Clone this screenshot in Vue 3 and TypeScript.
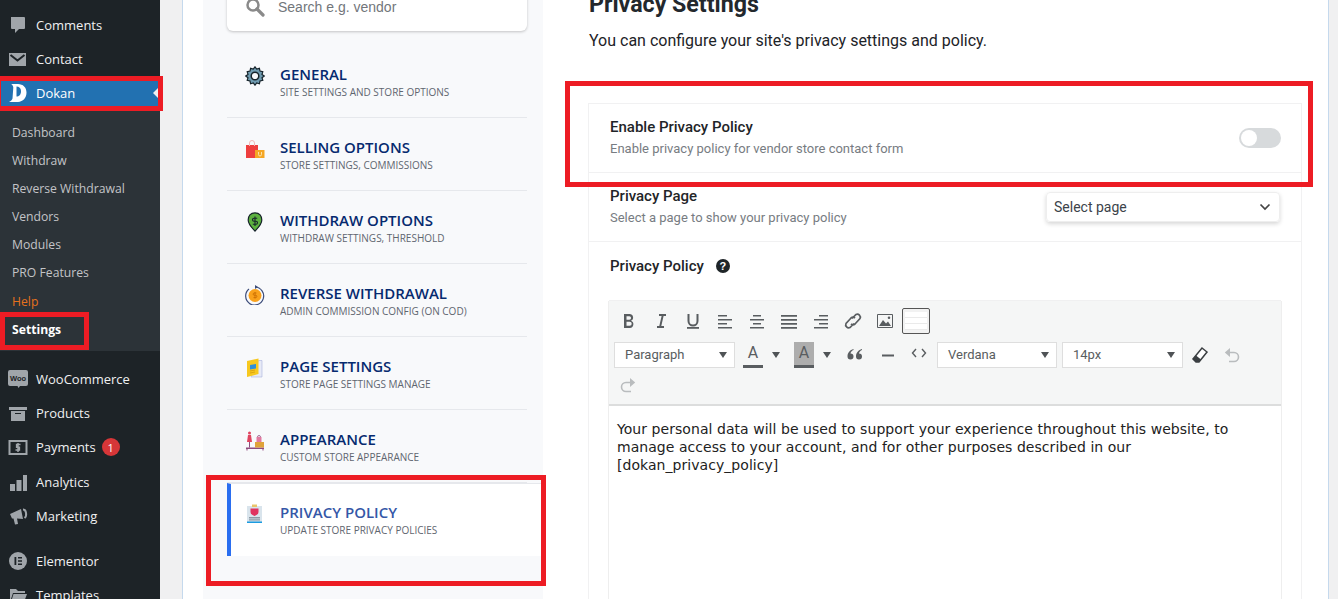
<script setup lang="ts">
interface Shape { d: string; fill?: string; stroke?: string; sw?: number }
interface MenuItem { label: string; icon: Shape[]; badge?: string; cls?: string }
interface NavItem { title: string; sub: string; icon: Shape[]; active?: boolean }

const g = '#a0a5aa'
const topMenu: MenuItem[] = [
  { label: 'Comments', icon: [{ d: 'M3 2h13a1 1 0 0 1 1 1v10a1 1 0 0 1-1 1h-5l-4 4v-4H4a1 1 0 0 1-1-1z', fill: g }] },
  { label: 'Contact', icon: [{ d: 'M1 4h17v13H1z', fill: g }, { d: 'M2.5 6l7 5.5 7-5.5', stroke: '#1d2327', sw: 2 }] }
]
const lowerA: MenuItem[] = [
  { label: 'Products', icon: [{ d: 'M1 4h18v3H1z', fill: g }, { d: 'M3 8h14v10H3z', fill: g }, { d: 'M7 10h6v1H7z', fill: '#1d2327' }] },
  { label: 'Payments', badge: '1', icon: [{ d: 'M1.5 4h17v13h-17z', stroke: g, sw: 2 }, { d: 'M12.5 7.5H8.6v2.8h2.8v2.8H7.5M10 6v9', stroke: g, sw: 1.5 }] },
  { label: 'Analytics', cls: 'nudge', icon: [{ d: 'M2 12h5v7H2zM8.5 8h5v11h-5zM15 3h4v16h-4z', fill: g }] },
  { label: 'Marketing', icon: [{ d: 'M2 8l11-5 2 10-6-.5 1 5.5-3 .5-1.500-6H4z', fill: g }, { d: 'M15 3.500a3 4.500 0 0 1 1.500 8.500', stroke: g, sw: 2 }] }
]
const lowerB: MenuItem[] = [
  { label: 'Elementor', icon: [{ d: 'M10 1a9 9 0 1 0 0 18 9 9 0 0 0 0-18z', fill: g }, { d: 'M6.500 6h1.800v8H6.500zM10 6h4v1.600h-4zM10 9.200h4v1.600h-4zM10 12.400h4V14h-4z', fill: '#1d2327' }] },
  { label: 'Templates', icon: [{ d: 'M2 4h6l2 2h7v2H5l-3 9z', fill: g }, { d: 'M5.500 9H19l-3 8H3z', fill: g }] }
]
const subMenu: string[] = ['Dashboard', 'Withdraw', 'Reverse Withdrawal', 'Vendors', 'Modules', 'PRO Features']

const nav: NavItem[] = [
  { title: 'GENERAL', sub: 'SITE SETTINGS AND STORE OPTIONS', icon: [
    { d: 'M10 .8l1.700 2.300 2.700-.8.600 2.800 2.800.6-.8 2.700 2.300 1.600-2.300 1.700.8 2.700-2.800.6-.6 2.800-2.700-.8L10 19.200l-1.700-2.200-2.700.8-.6-2.800-2.800-.6.8-2.700L.8 10l2.200-1.600-.8-2.700L5 5.100l.6-2.800 2.700.8z', fill: '#6f9bb0', stroke: '#17242b', sw: 1.200 },
    { d: 'M10 6.200a3.800 3.800 0 1 0 0 7.600 3.800 3.800 0 0 0 0-7.600z', fill: '#f8f9fb', stroke: '#17242b', sw: 1.500 }
  ] },
  { title: 'SELLING OPTIONS', sub: 'STORE SETTINGS, COMMISSIONS', icon: [
    { d: 'M1 6h12v13H1z', fill: '#ee3e3e' }, { d: 'M10 11h9.500v8H10z', fill: '#f5a623' },
    { d: 'M4.500 7V4a2.500 2.500 0 0 1 5 0v3', stroke: '#f3b8b8', sw: 1 }, { d: 'M13.500 13v2.500a1.500 1.500 0 0 0 3 0V13', stroke: '#fbe2a9', sw: 1 }
  ] },
  { title: 'WITHDRAW OPTIONS', sub: 'WITHDRAW SETTINGS, THRESHOLD', icon: [
    { d: 'M10 .8C5.500 .8 3.200 4 3.200 8c0 4.500 4 8 6.800 11 2.800-3 6.800-6.500 6.800-11 0-4-2.300-7.200-6.800-7.200z', fill: '#5cb13f', stroke: '#17242b', sw: 1.200 },
    { d: 'M12.200 6.200H9a1.500 1.500 0 0 0 0 3h2a1.500 1.500 0 0 1 0 3H7.800M10 4.500v9.500', stroke: '#17242b', sw: 1.100 }
  ] },
  { title: 'REVERSE WITHDRAWAL', sub: 'ADMIN COMMISSION CONFIG (ON COD)', icon: [
    { d: 'M4 4a9 9 0 1 0 6-2', stroke: '#3d4d7a', sw: 1.200 }, { d: 'M10 0l3 2-3 2z', fill: '#3d4d7a' },
    { d: 'M10 4a6.500 6.500 0 1 0 0 13 6.500 6.500 0 0 0 0-13z', fill: '#f9a11b' }, { d: 'M11.500 8H9.300a1 1 0 0 0 0 2.300h1.400a1 1 0 0 1 0 2.300H8.500M10 7v6.500', stroke: '#c76a00', sw: .8 }
  ] },
  { title: 'PAGE SETTINGS', sub: 'STORE PAGE SETTINGS MANAGE', icon: [
    { d: 'M13.500 2.500H17V19H6z', fill: '#e7eaf6', stroke: '#a8b2dd', sw: .6 }, { d: 'M2 3l11.500-2.500V16L2 19z', fill: '#f7c81e' },
    { d: 'M5 7l6-1v4.500l-6 1z', fill: '#2f8fd8' }, { d: 'M5 13l5-1M5 15l5-1', stroke: '#d59b0e', sw: .8 }
  ] },
  { title: 'APPEARANCE', sub: 'CUSTOM STORE APPEARANCE', icon: [
    { d: 'M1 16.500h18V18H1z', fill: '#8e4a7d' }, { d: 'M2 18v1.500M18 18v1.500', stroke: '#8e4a7d', sw: 1 },
    { d: 'M4.500 0.500a1.500 1.500 0 1 1 0 3 1.500 1.500 0 0 1 0-3zM3 4h3l1 7H2z', fill: '#e0445f' }, { d: 'M4 11h1v5.500H4z', fill: '#8e4a7d' },
    { d: 'M10 11h9v5.500h-9z', fill: '#e0a23a' }, { d: 'M11.500 6h5v5h-5z', fill: '#e27aa0' }, { d: 'M12.500 6a1.500 1.500 0 0 1 3 0', stroke: '#8e4a7d', sw: .8 }
  ] },
  { title: 'PRIVACY POLICY', sub: 'UPDATE STORE PRIVACY POLICIES', active: true, icon: [
    { d: 'M2 2h15v17H2z', fill: '#d9e4ec' }, { d: 'M7 .5h5V3H7z', fill: '#e9c46a' },
    { d: 'M5.500 4.500h8v3.500c0 2-2 3-4 4-2-1-4-2-4-4z', fill: '#e0335f' }, { d: 'M4 13h11v1.500H4zM4 15.300h11v1.200H4z', fill: '#8d9aa5' }, { d: 'M2 17.500h15V19H2z', fill: '#1b9be0' }
  ] }
]

const row1: Shape[][] = [
  [{ d: 'M5 3h5.500a3.500 3.500 0 0 1 1.500 6.700A3.800 3.800 0 0 1 11 17H5zM7.500 5.200v3.500h2.800a1.750 1.750 0 0 0 0-3.500zM7.500 10.800v4h3.200a2 2 0 0 0 0-4z', fill: '#595d60' }],
  [{ d: 'M8 3h7v2h-2.400l-2.300 10H13v2H6v-2h2.300l2.300-10H8z', fill: '#595d60' }],
  [{ d: 'M5.500 3v7a4.500 4.500 0 0 0 9 0V3', stroke: '#595d60', sw: 2 }, { d: 'M4 16h12v1.800H4z', fill: '#595d60' }],
  [{ d: 'M3 4h9v1.500H3zM3 8h14v1.500H3zM3 12h9v1.500H3zM3 16h14v1.500H3z', fill: '#595d60' }],
  [{ d: 'M6 4h8v1.500H6zM3 8h14v1.500H3zM6 12h8v1.500H6zM3 16h14v1.500H3z', fill: '#595d60' }],
  [{ d: 'M2 4h16v1.800H2zM2 8h16v1.800H2zM2 12h16v1.800H2zM2 16h16v1.800H2z', fill: '#595d60' }],
  [{ d: 'M8 4h9v1.500H8zM3 8h14v1.500H3zM8 12h9v1.500H8zM3 16h14v1.500H3z', fill: '#595d60' }],
  [{ d: 'M9 7.500l4-4a3 3 0 0 1 4 4l-5 5.500a3 3 0 0 1-4 0M11 12.500l-4 4a3 3 0 0 1-4-4l5-5.500a3 3 0 0 1 4 0', stroke: '#595d60', sw: 1.700 }],
  [{ d: 'M2.500 3.500h15v13h-15z', stroke: '#595d60', sw: 1 }, { d: 'M4 15l4-6 3 3.500 2-2 3 4.500z', fill: '#595d60' }, { d: 'M14 5.500a1.300 1.300 0 1 1 0 2.600 1.300 1.300 0 0 1 0-2.600z', fill: '#595d60' }]
]
</script>

<template>
  <div class="page">
    <aside class="side">
      <div class="row" v-for="m in topMenu" :key="m.label">
        <svg class="mi" viewBox="0 0 20 20"><path v-for="(s, i) in m.icon" :key="i" :d="s.d" :fill="s.fill || 'none'" :stroke="s.stroke" :stroke-width="s.sw" /></svg>
        <span>{{ m.label }}</span>
      </div>
      <div class="row current">
        <svg class="mi" viewBox="0 0 20 20"><path d="M3 1h7c5 0 8.500 3.500 8.500 8.500 0 5.500-3.500 9-8.500 9.500H1c2-1 3-2 3.500-3.500l.8-11c0-1.500-1-3-2.300-3.500z" fill="#fff" /><path d="M8.500 3.500v10c2.500 0 4.500-1.500 4.500-5.500 0-3-2-4.500-4.500-4.500z" fill="#2271b1" /></svg>
        <span>Dokan</span>
      </div>
      <div class="sub">
        <div class="sub-item" v-for="s in subMenu" :key="s">{{ s }}</div>
        <div class="sub-item help">Help</div>
        <div class="sub-item strong">Settings</div>
      </div>
      <div class="row woo">
        <svg class="mi" viewBox="0 0 20 20"><path d="M2 1h16a2 2 0 0 1 2 2v12a2 2 0 0 1-2 2h-6l-1.500 2-1-2H2a2 2 0 0 1-2-2V3a2 2 0 0 1 2-2z" :fill="g" /><text x="10" y="12" text-anchor="middle" font-size="7.500" font-weight="700" fill="#1d2327" font-family="Liberation Sans, sans-serif">Woo</text></svg>
        <span>WooCommerce</span>
      </div>
      <div class="row" v-for="m in lowerA" :key="m.label" :class="m.cls">
        <svg class="mi" viewBox="0 0 20 20"><path v-for="(s, i) in m.icon" :key="i" :d="s.d" :fill="s.fill || 'none'" :stroke="s.stroke" :stroke-width="s.sw" /></svg>
        <span>{{ m.label }}</span>
        <b v-if="m.badge" class="badge">{{ m.badge }}</b>
      </div>
      <div class="sep"></div>
      <div class="row" v-for="m in lowerB" :key="m.label">
        <svg class="mi" viewBox="0 0 20 20"><path v-for="(s, i) in m.icon" :key="i" :d="s.d" :fill="s.fill || 'none'" :stroke="s.stroke" :stroke-width="s.sw" /></svg>
        <span>{{ m.label }}</span>
      </div>
      <div class="mark mark-dokan"></div>
      <div class="mark mark-settings"></div>
    </aside>

    <div class="content">
      <div class="panel">
        <nav class="nav">
          <div class="search">
            <svg width="20" height="20" viewBox="0 0 20 20"><circle cx="8" cy="8" r="5.500" fill="none" stroke="#8a8a8a" stroke-width="2.500" /><path d="M12 12l6 6" stroke="#8a8a8a" stroke-width="3.200" stroke-linecap="round" /></svg>
            <span>Search e.g. vendor</span>
          </div>
          <div class="nav-item" v-for="n in nav" :key="n.title" :class="{ active: n.active }">
            <svg class="ni" viewBox="0 0 20 20"><path v-for="(s, i) in n.icon" :key="i" :d="s.d" :fill="s.fill || 'none'" :stroke="s.stroke" :stroke-width="s.sw" /></svg>
            <div>
              <div class="nt">{{ n.title }}</div>
              <div class="ns">{{ n.sub }}</div>
            </div>
          </div>
          <div class="mark mark-nav"></div>
        </nav>

        <main class="main">
          <h2>Privacy Settings</h2>
          <p class="lead">You can configure your site's privacy settings and policy.</p>
          <section class="field first-field">
            <div>
              <div class="fl">Enable Privacy Policy</div>
              <div class="fd">Enable privacy policy for vendor store contact form</div>
            </div>
            <div class="toggle"><i></i></div>
          </section>
          <section class="field page-field">
            <div>
              <div class="fl">Privacy Page</div>
              <div class="fd">Select a page to show your privacy policy</div>
            </div>
            <div class="select">
              <span>Select page</span>
              <svg width="12" height="8" viewBox="0 0 12 8"><path d="M1.500 1.500L6 6l4.500-4.500" fill="none" stroke="#444" stroke-width="1.700" /></svg>
            </div>
          </section>
          <section class="policy">
            <div class="fl pl">
              Privacy Policy
              <span class="q">?</span>
            </div>
            <div class="editor">
              <div class="toolbar">
                <div class="tb-row">
                  <span class="tb" v-for="(ic, n) in row1" :key="n"><svg width="20" height="20" viewBox="0 0 20 20"><path v-for="(s, i) in ic" :key="i" :d="s.d" :fill="s.fill || 'none'" :stroke="s.stroke" :stroke-width="s.sw" /></svg></span>
                  <span class="tb-table"><i></i></span>
                </div>
                <div class="tb-row second">
                  <div class="dd w121"><span>Paragraph</span><i class="car"></i></div>
                  <span class="color"><u>A</u></span><i class="car mid"></i>
                  <span class="color bg"><u>A</u></span><i class="car mid wide"></i>
                  <span class="tb t2"><svg width="20" height="20" viewBox="0 0 20 20"><path d="M8.500 4C5 5 2.500 7.500 2.500 11.500a3 3 0 1 0 3-3c0-1.500 1.500-3 3-3.500zM17 4c-3.500 1-6 3.500-6 7.500a3 3 0 1 0 3-3c0-1.500 1.500-3 3-3.500z" fill="#595d60" /></svg></span>
                  <span class="tb t2 hr"><svg width="20" height="20" viewBox="0 0 20 20"><path d="M4 9.500h12v2H4z" fill="#595d60" /></svg></span>
                  <span class="tb t2 up"><svg width="20" height="20" viewBox="0 0 20 20"><path d="M7 6L3.500 10 7 14M13 6l3.500 4-3.500 4" fill="none" stroke="#595d60" stroke-width="1.400" /></svg></span>
                  <div class="dd w120 first"><span>Verdana</span><i class="car"></i></div>
                  <div class="dd w121 s14"><span>14px</span><i class="car"></i></div>
                  <span class="tb t2 er"><svg width="20" height="20" viewBox="0 0 20 20"><path d="M12 3l5 4-8 10H6l-3-3z" fill="#fff" stroke="#3b3f42" stroke-width="1.500" /><path d="M3 14l3 3h3l2-2.500-5-4z" fill="#3b3f42" /></svg></span>
                  <span class="tb t2"><svg width="20" height="20" viewBox="0 0 20 20"><path d="M4.500 7.500H12a4.500 4.500 0 0 1 0 9H7" fill="none" stroke="#b9bcbe" stroke-width="1.600" /><path d="M8 3v9L2.800 7.500z" fill="#b9bcbe" /></svg></span>
                </div>
                <div class="tb-row third">
                  <span class="tb"><svg width="20" height="20" viewBox="0 0 20 20"><path d="M15.500 7.500H8a4.500 4.500 0 0 0 0 9h5" fill="none" stroke="#b9bcbe" stroke-width="1.600" /><path d="M12 3v9l5.200-4.500z" fill="#b9bcbe" /></svg></span>
                </div>
              </div>
              <div class="body">Your personal data will be used to support your experience throughout this website, to manage access to your account, and for other purposes described in our [dokan_privacy_policy]</div>
            </div>
          </section>
          <div class="mark mark-main"></div>
        </main>
      </div>
    </div>
  </div>
</template>

<style>
html, body { margin: 0; background: #f0f0f1; overflow: hidden; }
</style>

<style scoped>
.page { display: flex; width: 1338px; height: 599px; overflow: hidden; background: #f0f0f1; font-family: "Open Sans", sans-serif; }
.side { position: relative; width: 160px; flex: none; background: #1d2327; color: #f0f0f1; padding-top: 8px; box-sizing: border-box; font-size: 13px; }
.row { height: 34px; display: flex; align-items: center; padding-left: 8px; gap: 8px; }
.row.current { background: #2271b1; color: #fff; position: relative; }
.row.current::after { content: ""; position: absolute; right: 0; top: 10px; border: 7px solid transparent; border-right: 7px solid #f0f0f1; border-left: 0; }
.row.woo { margin-top: 11px; }
.row.nudge { margin-top: 1px; }
.mi { width: 20px; height: 20px; flex: none; }
.badge { width: 18px; height: 18px; border-radius: 50%; background: #d63638; color: #fff; font-size: 11px; font-weight: 400; display: flex; align-items: center; justify-content: center; margin-left: -2px; }
.sep { height: 11px; }
.sub { background: #2c3338; padding: 8px 0; }
.sub-item { height: 28px; line-height: 28px; padding-left: 12px; color: #c3c4c7; font-size: 12.200px; position: relative; top: 1px; }
.help { color: #e6711d; margin-top: 1px; }
.strong { color: #fff; font-weight: 700; }
.content { flex: 1; padding: 0 9px 0 22px; min-width: 0; }
.panel { display: flex; height: 599px; background: #fff; border-left: 1px solid #c5d9ed; border-right: 1px solid #c5d9ed; padding-left: 20px; box-sizing: border-box; }
.nav { position: relative; width: 340px; flex: none; background: #f8f9fb; padding: 0 0 0 24px; box-sizing: border-box; }
.search { height: 49px; margin: -18px 16px 14px 0; background: #fff; border-radius: 6px; box-shadow: 0 1px 3px rgba(0,0,0,.22); display: flex; align-items: center; padding: 0 0 0 18px; box-sizing: border-box; gap: 13px; color: #72767b; font: 14px "Liberation Sans", sans-serif; }
.nav-item { height: 73px; box-sizing: border-box; width: 300px; display: flex; align-items: center; gap: 15px; padding: 4px 0 0 18px; border-bottom: 1px solid #e6e8ec; }
.nav-item.active { background: #fff; width: 316px; border-left: 4px solid #2a6ef0; padding: 2px 0 0 14px; border-top: 1px solid #e6e8ec; border-bottom: 0; }
.ni { width: 20px; height: 20px; flex: none; margin-top: -14px; }
.nt { color: #062a6f; font-size: 15px; font-weight: 600; line-height: 18px; }
.active .nt { color: #3557a7; }
.ns { color: #5f6670; font-size: 10px; line-height: 18px; }
.main { position: relative; flex: none; width: 714px; margin-left: 45px; }
h2 { margin: -8px 0 0 1px; font: 700 23.200px/24px Roboto, sans-serif; color: #23282d; }
.lead { margin: 15px 0 0 1px; font: 16px/20px Roboto, sans-serif; color: #1d2327; }
.field { display: flex; align-items: center; justify-content: space-between; height: 69px; border: 1px solid #f1f1f2; border-bottom: 0; box-sizing: border-box; padding: 0 21px 0 21px; }
.first-field { margin-top: 52px; padding-top: 1px; }
.first-field .toggle { margin: -1px -1px 0 0; }
.fl { font: 500 15px/20px Roboto, sans-serif; color: #1f2528; margin-bottom: 1px; }
.fd { font: 13px/22px Roboto, sans-serif; color: #777c82; }
.toggle { width: 42px; height: 20px; border-radius: 10px; background: #d7dadc; position: relative; }
.toggle i { position: absolute; left: 2px; top: 2px; width: 16px; height: 16px; border-radius: 50%; background: #fff; }
.page-field { align-items: flex-start; padding-top: 13px; }
.select { width: 234px; height: 30px; margin-top: 6px; box-sizing: border-box; border: 1px solid #eee; border-radius: 4px; box-shadow: 0 2px 4px rgba(0,0,0,.16); display: flex; align-items: center; justify-content: space-between; padding: 0 8px 0 7px; font: 14px Roboto, sans-serif; color: #3c434a; }
.policy { border: 1px solid #f1f1f2; border-bottom: 0; padding: 14px 19px 0 19px; height: 400px; box-sizing: border-box; }
.pl { display: flex; align-items: center; gap: 12px; padding-left: 2px; margin-bottom: 25px; }
.q { width: 14px; height: 14px; border-radius: 50%; background: #1f2528; color: #fff; font: 700 11px/14px "Liberation Sans", sans-serif; text-align: center; }
.editor { border: 1px solid #eee; border-top: 0; width: 674px; box-sizing: border-box; height: 320px; }
.toolbar { height: 105px; box-sizing: border-box; background: #f5f6f6; border-bottom: 2px solid #dcdddd; padding: 7px 4px 0; box-shadow: 0 -1px 0 #f0f0f1; }
.tb-row { display: flex; align-items: center; }
.tb { width: 32px; height: 26px; display: flex; align-items: center; justify-content: center; flex: none; }
.tb-table { width: 26px; height: 24px; border: 1px solid #555; border-radius: 2px; background: #f2f2f2; margin-left: 1px; display: flex; align-items: center; justify-content: center; }
.tb-table i { width: 22px; height: 18px; background: repeating-linear-gradient(#fff 0 5px, #eaeaea 5px 6px); }
.second { margin-top: 8px; margin-left: 1px; }
.third { margin-top: 4px; margin-left: -1px; }
.dd { height: 26px; box-sizing: border-box; border: 1px solid #dedede; background: #fff; display: flex; align-items: center; justify-content: space-between; padding: 0 7px 2px 10px; font: 13px Roboto, sans-serif; color: #595d60; flex: none; }
.dd .car { margin-top: 2px; }
.w121 { width: 121px; }
.w120 { width: 120px; }
.first { margin-left: 2px; }
.s14 { margin-left: 5px; }
.car { width: 0; height: 0; border: 4px solid transparent; border-top: 6px solid #4f5356; border-bottom: 0; display: block; flex: none; }
.car.mid { margin: 0 7px 0 9px; }
.car.mid.wide { margin-right: 8px; }
.color { width: 20px; height: 26px; margin-left: 8px; position: relative; text-align: center; font: 16px/22px Roboto, sans-serif; color: #595d60; box-sizing: border-box; border-bottom: 3px solid #595d60; flex: none; }
.color u { text-decoration: none; }
.color.bg { background: #adadad; margin-left: 7px; }
.t2 { width: 32px; }
.hr { margin-left: 1px; }
.up { margin-top: -5px; width: 32px; margin-left: -1px; }
.er { margin-left: 1px; }
.body { padding: 14px 8px; font: 14px/18px "DejaVu Sans", sans-serif; color: #222; letter-spacing: .05px; }
.mark { position: absolute; border: 5px solid #ed1c24; box-sizing: border-box; pointer-events: none; }
.mark-dokan { left: -4px; top: 76px; width: 167px; height: 35px; }
.mark-settings { left: 0; top: 312px; width: 89px; height: 38px; }
.mark-nav { left: 3px; top: 475px; width: 340px; height: 111px; }
.mark-main { left: -23px; top: 81px; width: 748px; height: 106px; }
</style>
